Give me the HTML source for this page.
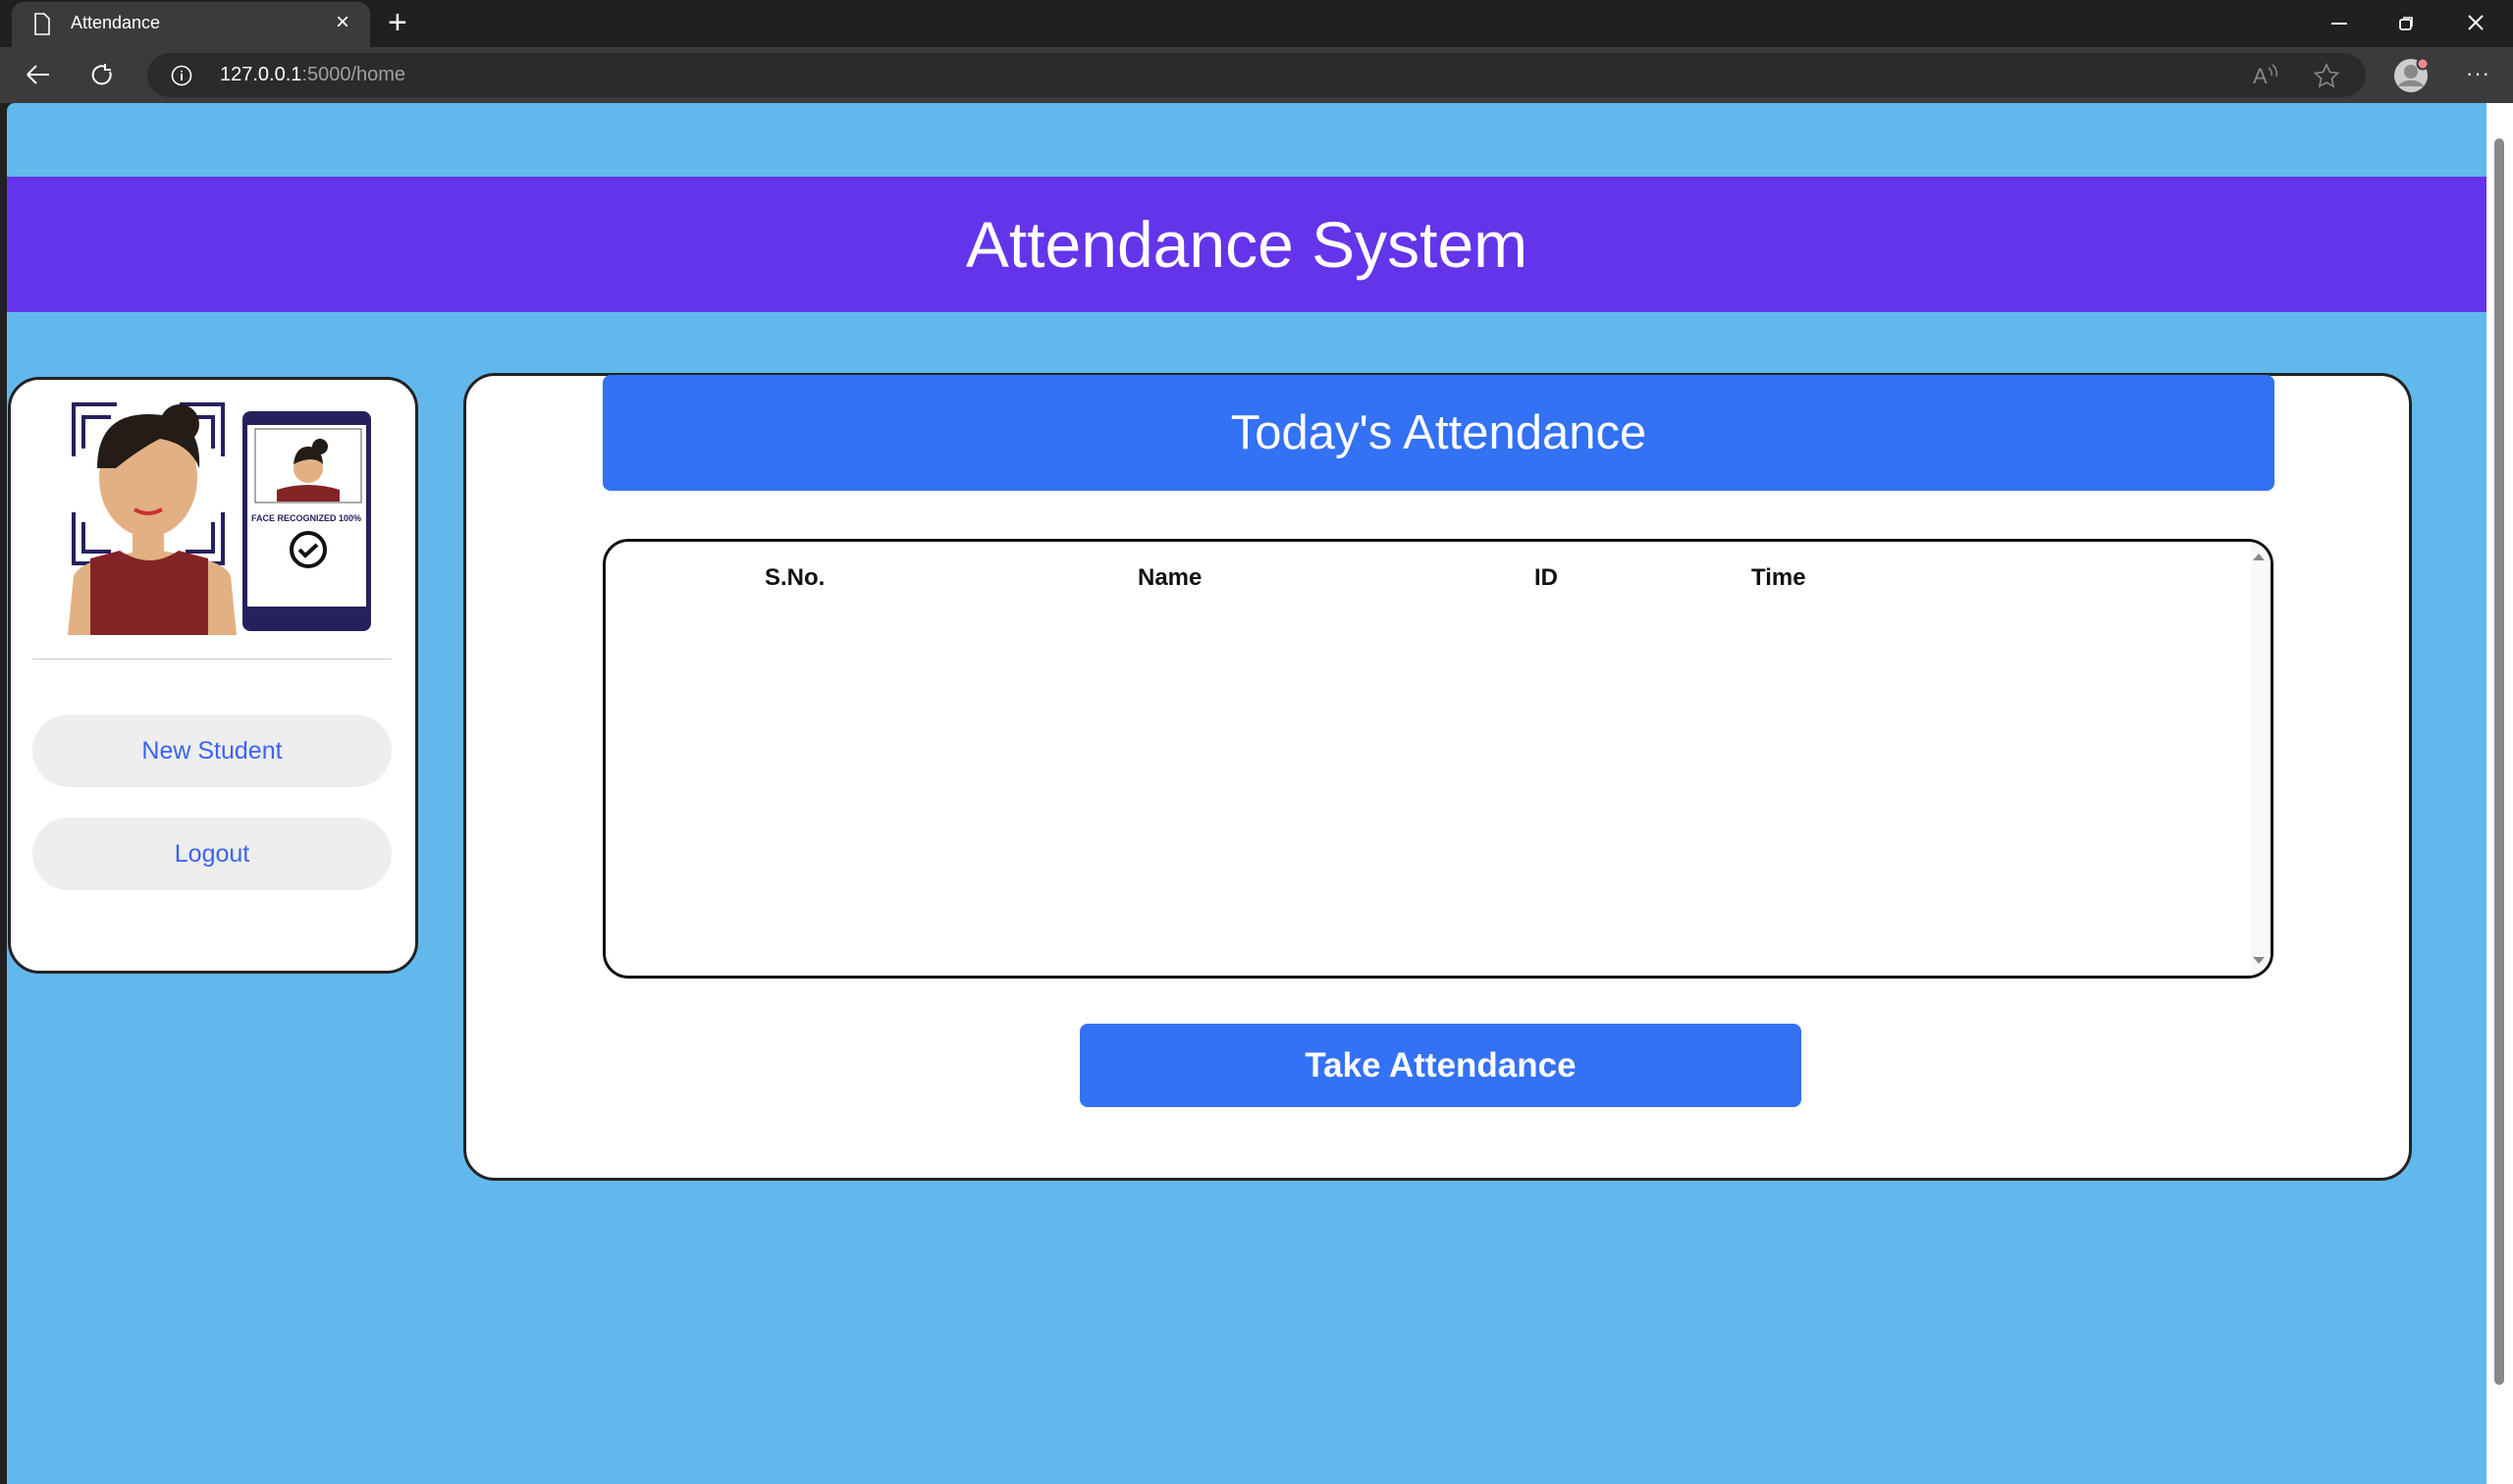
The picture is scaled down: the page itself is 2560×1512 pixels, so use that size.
<!DOCTYPE html>
<html><head><meta charset="utf-8"><style>
*{margin:0;padding:0;box-sizing:border-box}
body{width:2560px;height:1512px;overflow:hidden;background:#202020;font-family:"Liberation Sans",sans-serif;position:relative}
.abs{position:absolute}
#tabs{left:0;top:0;width:2560px;height:48px;background:#202020}
#tab{left:12px;top:2px;width:365px;height:46px;background:#3b3b3b;border-radius:12px 12px 0 0;color:#fff;font-size:18px}
#bar{left:0;top:48px;width:2560px;height:57px;background:#3b3b3b}
#url{left:150px;top:54px;width:2260px;height:45px;background:#2b2b2b;border-radius:23px;color:#fff;font-size:20px}
#page{left:7px;top:105px;width:2526px;height:1407px;background:#61b8ec;border-radius:8px 0 0 0;overflow:hidden}
#sb{left:2533px;top:105px;width:27px;height:1407px;background:#fff}
#hdr{left:0;top:75px;width:2526px;height:138px;background:#6434ea;color:#fff;font-size:66px;text-align:center;line-height:138px}
.card{background:#fff;border:3px solid #222;border-radius:32px}
.btn{background:#eeeeee;border-radius:37px;color:#3a63f5;font-size:25px;text-align:center}
.th{font-weight:bold;font-size:24px;color:#111;top:23px}
</style></head><body>
<div class="abs" id="tabs"></div>
<div class="abs" id="tab">
 <svg class="abs" style="left:22px;top:11px" width="18" height="24" viewBox="0 0 18 24"><path d="M2 1h9l5 5v16H2z" fill="none" stroke="#fff" stroke-width="1.6"/></svg>
 <div class="abs" style="left:60px;top:11px">Attendance</div>
 <div class="abs" style="left:330px;top:7px;font-size:24px">×</div>
</div>
<div class="abs" style="left:395px;top:4px;color:#fff;font-size:34px;font-weight:300">+</div>
<svg class="abs" style="left:2375px;top:14px" width="170" height="20" viewBox="0 0 170 20"><path d="M0 10h16" stroke="#fff" stroke-width="2"/><rect x="70" y="6" width="11" height="10" rx="2" fill="none" stroke="#fff" stroke-width="1.8"/><path d="M73 4h9v9" fill="none" stroke="#fff" stroke-width="1.6"/><path d="M140 2l14 14M154 2l-14 14" stroke="#fff" stroke-width="2"/></svg>
<div class="abs" id="bar"></div>
<svg class="abs" style="left:26px;top:62px" width="95" height="28" viewBox="0 0 95 28"><path d="M2 14h22M2 14l9-9M2 14l9 9" fill="none" stroke="#fff" stroke-width="2"/><path d="M81 6a9 9 0 1 0 5 5M81 3v6h6" fill="none" stroke="#fff" stroke-width="2"/></svg>
<div class="abs" id="url">
 <svg class="abs" style="left:24px;top:12px" width="22" height="22"><circle cx="11" cy="11" r="9.5" fill="none" stroke="#fff" stroke-width="1.6"/><path d="M11 9v7M11 6v1.5" stroke="#fff" stroke-width="2"/></svg>
 <div class="abs" style="left:74px;top:11px">127.0.0.1<span style="color:#a0a0a0">:5000/home</span></div>
 <svg class="abs" style="left:2145px;top:9px" width="100" height="28"><text x="0" y="22" fill="#888" font-size="22" font-family="Liberation Sans">A</text><path d="M16 6a8 8 0 0 1 3 8M20 3a12 12 0 0 1 4 12" fill="none" stroke="#888" stroke-width="1.5"/><path d="M75 3l3.5 7.5 8 1-6 5.5 1.6 8-7.1-4-7.1 4 1.6-8-6-5.5 8-1z" fill="none" stroke="#888" stroke-width="1.6"/></svg>
</div>
<svg class="abs" style="left:2438px;top:58px" width="40" height="38"><circle cx="18" cy="19" r="17" fill="#ccc"/><circle cx="18" cy="15" r="7" fill="#888"/><path d="M5 30a14 10 0 0 1 26 0" fill="#888"/><circle cx="30" cy="7" r="5.5" fill="#f08a8a" stroke="#3b3b3b" stroke-width="2"/></svg>
<div class="abs" style="left:2512px;top:62px;color:#fff;font-size:22px;letter-spacing:1px">···</div>
<div class="abs" id="page">
 <div class="abs" id="hdr">Attendance System</div>
 <div class="abs card" style="left:1px;top:279px;width:418px;height:608px">
  <svg class="abs" style="left:56px;top:20px" width="315" height="240" viewBox="0 0 315 240">
   <g fill="none" stroke="#25215e" stroke-width="4"><path d="M8 58V5h44M18 50V18h28M8 115v52h44M18 125v30h28M160 58V5h-44M150 50V18h-28M160 115v52h-44M150 125v30h-28"/></g>
   <path d="M2 240l6-60q6-14 40-20l30-6h20l30 6q34 6 40 20l6 60z" fill="#e2b083"/>
   <path d="M25 240v-78l30-8q30 20 60 0l30 8v78z" fill="#842326"/>
   <rect x="68" y="120" width="32" height="40" fill="#e2b083"/>
   <ellipse cx="84" cy="80" rx="50" ry="60" fill="#e2b083"/>
   <path d="M32 70q0-55 52-55 55 0 52 55-10-25-40-30-20 10-45 30z" fill="#241c16"/>
   <circle cx="116" cy="25" r="20" fill="#241c16"/>
   <path d="M70 112q14 8 28 0" stroke="#c33" stroke-width="4" fill="none"/>
   <rect x="180" y="12" width="131" height="224" rx="8" fill="#25215e"/>
   <rect x="185" y="26" width="121" height="185" fill="#fff"/>
   <rect x="193" y="30" width="108" height="75" fill="#fff" stroke="#555"/>
   <path d="M215 104v-12q32-10 64 0v12z" fill="#842326"/>
   <circle cx="247" cy="70" r="15" fill="#e2b083"/><circle cx="259" cy="48" r="8" fill="#241c16"/><path d="M232 66q2-18 15-18 14 0 15 18-10-10-30 0z" fill="#241c16"/>
   <text x="189" y="124" font-size="9" font-weight="bold" fill="#25215e" font-family="Liberation Sans">FACE RECOGNIZED 100%</text>
   <circle cx="247" cy="153" r="17" fill="none" stroke="#111" stroke-width="4"/><path d="M238 153l6 6 12-11" fill="none" stroke="#111" stroke-width="4"/>
  </svg>
  <div class="abs" style="left:22px;top:284px;width:366px;height:1px;background:#ccc"></div>
  <div class="abs btn" style="left:22px;top:341px;width:366px;height:74px;line-height:74px">New Student</div>
  <div class="abs btn" style="left:22px;top:446px;width:366px;height:74px;line-height:74px">Logout</div>
 </div>
 <div class="abs card" style="left:465px;top:275px;width:1985px;height:823px">
  <div class="abs" style="left:139px;top:-1px;width:1703px;height:118px;background:#3371f5;border-radius:8px;color:#fff;font-size:49px;text-align:center;line-height:118px">Today's Attendance</div>
  <div class="abs" style="left:139px;top:166px;width:1702px;height:448px;border:3px solid #111;border-radius:26px;overflow:hidden">
   <div class="abs th" style="left:162px">S.No.</div>
   <div class="abs th" style="left:542px">Name</div>
   <div class="abs th" style="left:946px">ID</div>
   <div class="abs th" style="left:1167px">Time</div>
   <div class="abs" style="right:0;top:0;width:20px;height:448px;background:#f8f8f8"></div>
   <div class="abs" style="right:6px;top:12px;border:6px solid transparent;border-bottom:7px solid #888;border-top:0"></div>
   <div class="abs" style="right:6px;bottom:12px;border:6px solid transparent;border-top:7px solid #888;border-bottom:0"></div>
  </div>
  <div class="abs" style="left:625px;top:660px;width:735px;height:85px;background:#3371f5;border-radius:8px;color:#fff;font-size:35px;font-weight:bold;text-align:center;line-height:85px">Take Attendance</div>
 </div>
</div>
<div class="abs" id="sb">
 <div class="abs" style="left:8px;top:36px;width:10px;height:1270px;background:#888;border-radius:5px"></div>
</div>
</body></html>
